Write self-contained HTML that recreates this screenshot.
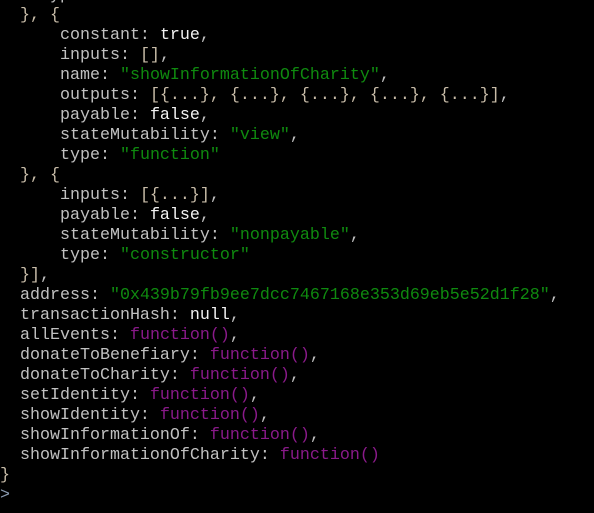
<!DOCTYPE html>
<html><head><meta charset="utf-8"><style>
html,body{margin:0;padding:0;background:#000;width:594px;height:513px;overflow:hidden}
pre{position:absolute;left:0;top:-14px;margin:0;font-family:"Liberation Mono",monospace;font-size:16.67px;line-height:20px;color:#c0c0c0;white-space:pre}
.w{color:#f2f2f2}.g{color:#0f8a0f}.p{color:#8a1a8a}.y{color:#c8bca8}.a{color:#8a9ab0}
</style></head><body>
<pre>    type: <span class="g">"function"</span>
  <span class="y">}, {</span>
      constant: <span class="w">true</span>,
      inputs: <span class="y">[]</span>,
      name: <span class="g">"showInformationOfCharity"</span>,
      outputs: <span class="y">[{...}, {...}, {...}, {...}, {...}]</span>,
      payable: <span class="w">false</span>,
      stateMutability: <span class="g">"view"</span>,
      type: <span class="g">"function"</span>
  <span class="y">}, {</span>
      inputs: <span class="y">[{...}]</span>,
      payable: <span class="w">false</span>,
      stateMutability: <span class="g">"nonpayable"</span>,
      type: <span class="g">"constructor"</span>
  <span class="y">}]</span>,
  address: <span class="g">"0x439b79fb9ee7dcc7467168e353d69eb5e52d1f28"</span>,
  transactionHash: <span class="w">null</span>,
  allEvents: <span class="p">function()</span>,
  donateToBenefiary: <span class="p">function()</span>,
  donateToCharity: <span class="p">function()</span>,
  setIdentity: <span class="p">function()</span>,
  showIdentity: <span class="p">function()</span>,
  showInformationOf: <span class="p">function()</span>,
  showInformationOfCharity: <span class="p">function()</span>
<span class="y">}</span>
<span class="a">&gt;</span></pre>
</body></html>
